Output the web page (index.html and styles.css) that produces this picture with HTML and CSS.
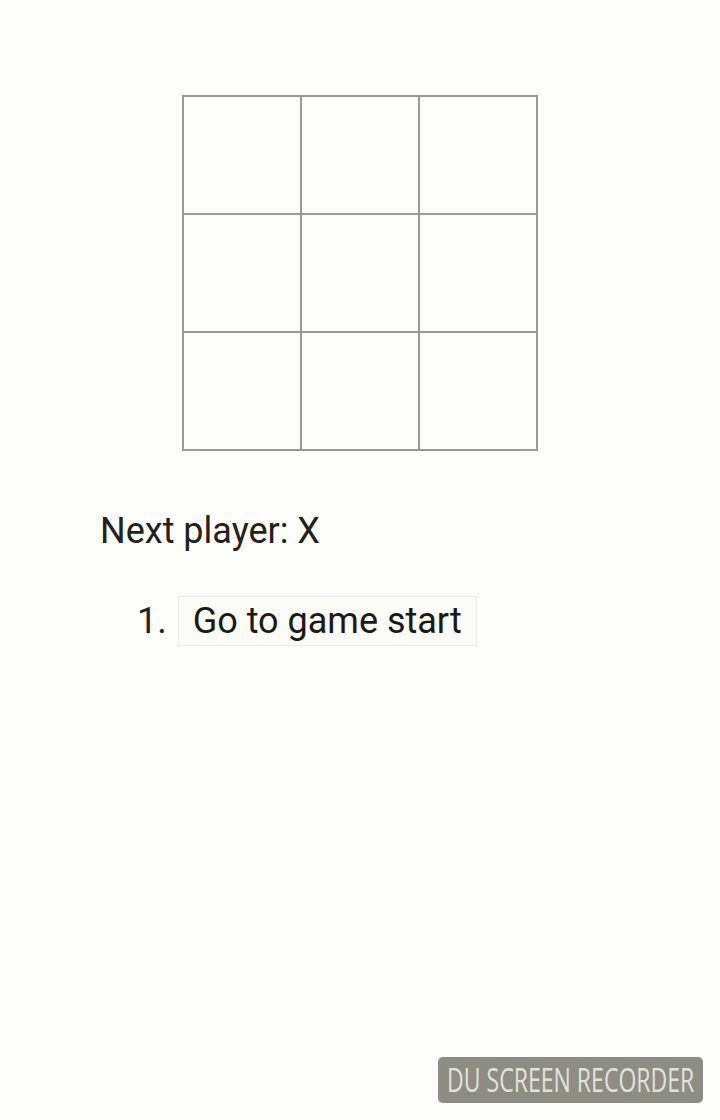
FILE: index.html
```html
<!DOCTYPE html>
<html>
<head>
<meta charset="utf-8">
<link rel="stylesheet" href="styles.css">
</head>
<body>
<div class="game">
  <div class="board">
    <div class="row"><button class="square"></button><button class="square"></button><button class="square"></button></div>
    <div class="row"><button class="square"></button><button class="square"></button><button class="square"></button></div>
    <div class="row"><button class="square"></button><button class="square"></button><button class="square"></button></div>
  </div>
  <div class="info">
    <div class="status">Next player: X</div>
    <ol class="moves">
      <li><button class="move">Go to game start</button></li>
    </ol>
  </div>
</div>
<div class="recorder"><span class="rec-text">DU SCREEN RECORDER</span></div>
</body>
</html>
```
FILE: styles.css
```css
html, body {
  margin: 0;
  padding: 0;
  background: #fdfdfc;
  height: 100%;
}
body {
  font-family: Roboto, "Noto Sans", sans-serif;
  color: #22221a;
  position: relative;
  width: 720px;
  height: 1120px;
  overflow: hidden;
}
.game {
  padding-top: 95px;
}
.board {
  margin-left: 182px;
  width: 356px;
  display: flex;
  flex-direction: column;
}
.row {
  display: flex;
}
.row + .row {
  margin-top: -2px;
}
.square {
  width: 120px;
  height: 120px;
  border: 2px solid #9a9a92;
  background: #fdfdfc;
  padding: 0;
  margin: 0;
}
.square + .square {
  margin-left: -2px;
}
.info {
  margin-top: 58px;
  padding-left: 100px;
}
.status {
  font-size: 36px;
  line-height: 44px;
}
.moves {
  margin: 42px 0 0 0;
  padding-left: 37px;
  font-size: 36px;
  list-style-position: inside;
}
.moves li {
  line-height: 52px;
}
.move {
  font-family: Roboto, "Noto Sans", sans-serif;
  font-size: 36px;
  line-height: 40px;
  color: #1a1a14;
  background: #fbfbf8;
  border: 1px solid #ecece4;
  padding: 4px 14px;
  margin-left: 2px;
}
.recorder {
  position: absolute;
  left: 438px;
  top: 1057px;
  width: 265px;
  height: 46px;
  border-radius: 5px;
  background: #8d8d84;
  color: #e2e2dc;
  font-family: "Open Sans", "Liberation Sans", sans-serif;
  font-size: 32px;
  line-height: 46px;
  text-align: center;
  white-space: nowrap;
}
.rec-text {
  display: inline-block;
  transform: scale(0.72, 1);
  transform-origin: center;
  margin: 0 -60px;
}
```
